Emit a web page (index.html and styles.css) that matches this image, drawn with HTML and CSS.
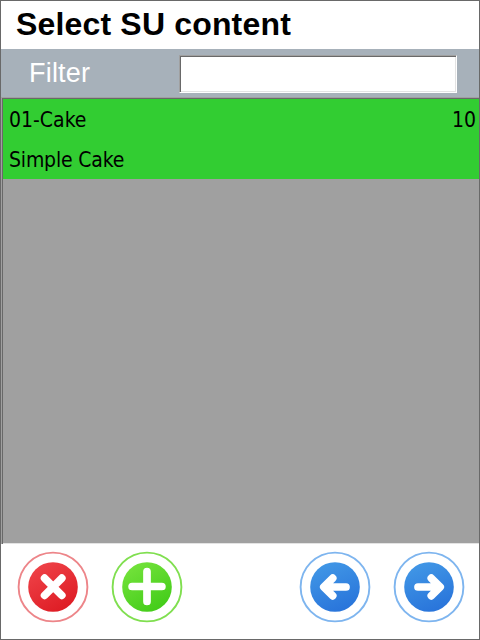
FILE: index.html
```
<!DOCTYPE html>
<html lang="en">
<head>
<meta charset="utf-8">
<title>Select SU content</title>
<link rel="stylesheet" href="styles.css">
</head>
<body>
<main class="window">
  <h1 class="title"><span class="title-text">Select SU content</span></h1>
  <div class="filter">
    <label class="filter-label" for="filter">Filter</label>
    <input class="filter-input" id="filter" type="text">
  </div>
  <section class="list">
    <div class="item">
      <div class="row"><span class="code">01-Cake</span><span class="qty">10</span></div>
      <div class="row"><span class="name">Simple Cake</span></div>
    </div>
  </section>
  <footer class="actions">
    <button class="action" aria-label="Cancel">
      <svg viewBox="-36 -36 72 72">
        <defs><linearGradient id="red" x1="0.2" y1="0" x2="0.8" y2="1"><stop offset="0" stop-color="#ef4349"/><stop offset="1" stop-color="#dd1a22"/></linearGradient></defs>
        <circle class="ring ring-red" r="34.4"/>
        <circle r="24.8" fill="url(#red)"/>
        <path class="cross" d="M-8.4-8.8 8.8 8.4M8.8-8.8-8.4 8.4"/>
      </svg>
    </button>
    <button class="action" aria-label="Add">
      <svg viewBox="-36 -36 72 72">
        <defs><linearGradient id="green" x1="0.2" y1="0" x2="0.8" y2="1"><stop offset="0" stop-color="#75e33c"/><stop offset="1" stop-color="#40cb17"/></linearGradient></defs>
        <circle class="ring ring-green" r="34.4"/>
        <circle r="24.8" fill="url(#green)"/>
        <path class="plus" d="M0-15.4V14.4M-14.9-.5H14.9"/>
      </svg>
    </button>
    <button class="action action-back" aria-label="Back">
      <svg viewBox="-36 -36 72 72">
        <defs><linearGradient id="blue" x1="0.3" y1="0" x2="0.7" y2="1"><stop offset="0" stop-color="#4197e6"/><stop offset="1" stop-color="#2873da"/></linearGradient></defs>
        <circle class="ring ring-blue" r="34.4"/>
        <circle r="24.8" fill="url(#blue)"/>
        <path class="arrow" d="M11 0H-10M-2.3-8.8-11.2 0-2.3 8.8"/>
      </svg>
    </button>
    <button class="action" aria-label="Next">
      <svg viewBox="-36 -36 72 72">
        <circle class="ring ring-blue" r="34.4"/>
        <circle r="24.8" fill="url(#blue)"/>
        <path class="arrow" d="M-11 0H10M2.3-8.8 11.2 0 2.3 8.8"/>
      </svg>
    </button>
  </footer>
</main>
</body>
</html>
```
FILE: styles.css
```
* { box-sizing: border-box; }
body { margin: 0; }
.window {
  width: 480px;
  height: 640px;
  display: flex;
  flex-direction: column;
  border: 1px solid #696969;
  background: #fff;
  font-family: "Liberation Sans", Arial, sans-serif;
}
.title {
  height: 48px;
  margin: 0;
  padding-left: 15px;
  font-size: 32px;
  line-height: 46px;
  letter-spacing: 0.17px;
  color: #000;
  white-space: nowrap;
}
.filter {
  height: 48px;
  display: flex;
  align-items: center;
  padding: 2px 22px 0 28px;
  background: #a7b1ba;
}
.filter-label {
  flex: 0 0 150px;
  padding-bottom: 2px;
  font-size: 27px;
  line-height: 40px;
  letter-spacing: 0.2px;
  color: #fff;
}
.filter-input {
  flex: 1;
  min-width: 0;
  height: 38px;
  padding: 0 4px;
  border: 1px solid;
  border-color: #a0a0a0 #fff #fff #a0a0a0;
  border-radius: 0;
  outline: none;
  background: #fff;
  box-shadow: inset 1px 1px #696969, inset -1px -1px #e3e3e3;
  font: 24px "Liberation Sans", Arial, sans-serif;
}
.list {
  height: 447px;
  padding: 2px 0 1px 2px;
  background: #a0a0a0;
  box-shadow: inset 1px 1px #a0a0a0, inset 2px 2px #696969, inset 0 -1px #e3e3e3;
}
.item {
  height: 80px;
  background: #32cd32;
  color: #000;
  font-family: "DejaVu Sans Condensed", "DejaVu Sans", sans-serif;
  font-size: 21px;
}
.row {
  height: 40px;
  display: flex;
  justify-content: space-between;
  padding: 1px 3px 0 6px;
  line-height: 40px;
}
.name { letter-spacing: -0.18px; }
.actions {
  flex: 1;
  display: flex;
  align-items: flex-start;
  padding: 7px 14px 0 16px;
  gap: 22px;
}
.action {
  width: 72px;
  height: 72px;
  padding: 0;
  border: 0;
  background: none;
}
.action-back { margin-left: auto; }
.action svg { display: block; width: 72px; height: 72px; }
.ring { fill: none; stroke-width: 1.9; }
.ring-red { stroke: #ed8589; }
.ring-green { stroke: #80df50; }
.ring-blue { stroke: #7eb5ef; }
.cross, .plus, .arrow { fill: none; stroke: #fff; stroke-linecap: round; stroke-linejoin: round; stroke-width: 7.7; }
```
